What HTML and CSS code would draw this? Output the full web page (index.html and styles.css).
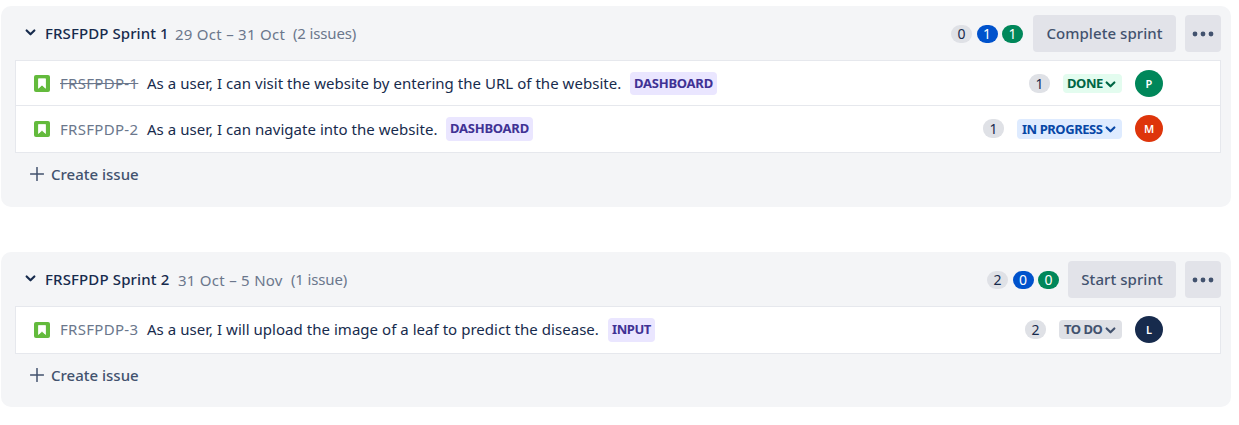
FILE: index.html
```
<!DOCTYPE html>
<html lang="en">
<head>
<meta charset="utf-8">
<title>Backlog</title>
<link rel="stylesheet" href="styles.css">
</head>
<body>
<svg class="defs" width="0" height="0">
  <symbol id="chevron" viewBox="0 0 10 8"><path d="M1.5 2.2 5 5.6 8.5 2.2" fill="none" stroke="currentColor" stroke-width="2" stroke-linecap="round" stroke-linejoin="round"/></symbol>
  <symbol id="story" viewBox="0 0 16 17" preserveAspectRatio="none"><rect width="16" height="17" rx="2" fill="#63ba3c"/><path d="M4.5 3.8h7v9.4L8 9.9l-3.500 3.300z" fill="#fff" stroke="#fff" stroke-linejoin="round" stroke-width=".8"/></symbol>
  <symbol id="plus" viewBox="0 0 14 14"><path d="M7 .5v13M.5 7h13" fill="none" stroke="currentColor" stroke-width="1.500" stroke-linecap="round"/></symbol>
  <symbol id="dots" viewBox="0 0 22 6"><g fill="currentColor"><circle cx="3" cy="3" r="2.400"/><circle cx="11" cy="3" r="2.400"/><circle cx="19" cy="3" r="2.400"/></g></symbol>
</svg>
<main class="backlog">
  <section class="sprint">
    <header class="sprint-head">
      <svg class="toggle"><use href="#chevron"/></svg>
      <h2 class="title title-1">FRSFPDP Sprint 1</h2>
      <span class="dates dates-1">29 Oct – 31 Oct</span>
      <span class="total">(2 issues)</span>
      <div class="counts"><span class="pill">0</span><span class="pill blue">1</span><span class="pill green">1</span></div>
      <button class="btn complete"><span>Complete sprint</span></button>
      <button class="btn more"><svg><use href="#dots"/></svg></button>
    </header>
    <div class="issues">
      <div class="issue first">
        <svg class="story"><use href="#story"/></svg>
        <span class="key resolved">FRSFPDP-1</span>
        <span class="summary s1">As a user, I can visit the website by entering the URL of the website.</span>
        <span class="epic">DASHBOARD</span>
        <span class="pill points">1</span>
        <span class="status done"><span>DONE</span><svg><use href="#chevron"/></svg></span>
        <span class="avatar av-p">P</span>
      </div>
      <div class="issue">
        <svg class="story"><use href="#story"/></svg>
        <span class="key">FRSFPDP-2</span>
        <span class="summary s2">As a user, I can navigate into the website.</span>
        <span class="epic tall">DASHBOARD</span>
        <span class="pill points">1</span>
        <span class="status progress"><span>IN PROGRESS</span><svg><use href="#chevron"/></svg></span>
        <span class="avatar av-m">M</span>
      </div>
    </div>
    <div class="create"><svg><use href="#plus"/></svg><span>Create issue</span></div>
  </section>
  <section class="sprint short">
    <header class="sprint-head">
      <svg class="toggle"><use href="#chevron"/></svg>
      <h2 class="title title-2">FRSFPDP Sprint 2</h2>
      <span class="dates dates-2">31 Oct – 5 Nov</span>
      <span class="total">(1 issue)</span>
      <div class="counts"><span class="pill">2</span><span class="pill blue">0</span><span class="pill green">0</span></div>
      <button class="btn start"><span>Start sprint</span></button>
      <button class="btn more"><svg><use href="#dots"/></svg></button>
    </header>
    <div class="issues">
      <div class="issue last">
        <svg class="story"><use href="#story"/></svg>
        <span class="key">FRSFPDP-3</span>
        <span class="summary s3">As a user, I will upload the image of a leaf to predict the disease.</span>
        <span class="epic tall input">INPUT</span>
        <span class="pill points">2</span>
        <span class="status todo"><span>TO DO</span><svg><use href="#chevron"/></svg></span>
        <span class="avatar av-l">L</span>
      </div>
    </div>
    <div class="create"><svg><use href="#plus"/></svg><span>Create issue</span></div>
  </section>
</main>
</body>
</html>
```
FILE: styles.css
```
* { box-sizing: border-box; }
body { margin: 0; background: #fff; color: #172b4d; font: 15px/20px "Noto Sans", "Open Sans", sans-serif; white-space: nowrap; }
svg { display: block; flex: none; }
.defs { display: none; }
.backlog { display: flex; flex-direction: column; gap: 45px; width: 1231px; padding: 6px 0 0 1px; }
.sprint { height: 201px; padding: 9px 10px 0 14px; background: #f4f5f7; border-radius: 10px; }
.sprint.short { height: 155px; }
.sprint-head { display: flex; align-items: center; height: 37px; }
.toggle { width: 11px; height: 9px; margin: 0 9px 3px 10px; }
.title { margin: 0; padding-bottom: 2px; font-size: 15px; line-height: 20px; font-weight: 500; letter-spacing: .09px; }
.title-1 { width: 130px; }
.title-2 { width: 133px; letter-spacing: .13px; }
.dates { color: #6b778c; letter-spacing: .27px; }
.dates-1 { width: 118px; }
.dates-2 { width: 113px; }
.total { padding-bottom: 2px; color: #6b778c; letter-spacing: -.15px; }
.counts { display: flex; gap: 4.500px; margin: 0 10px 0 auto; }
.short .counts { margin-right: 9px; }
.pill { flex: none; width: 21px; height: 18px; border-radius: 9px; background: #dfe1e6; font-size: 14px; line-height: 18px; text-align: center; }
.pill.blue { background: #0052cc; color: #fff; }
.pill.green { background: #00875a; color: #fff; }
.btn { display: flex; align-items: center; justify-content: center; height: 37px; padding: 0; border: 0; border-radius: 4px; background: #e2e3e9; color: #42526e; font: 500 15px/20px "Noto Sans", "Open Sans", sans-serif; }
.btn span { padding-bottom: 2px; letter-spacing: .06px; }
.complete { width: 143px; }
.start { width: 108px; }
.more { width: 36px; margin-left: 9px; }
.more svg { width: 22px; height: 6px; }
.issues { margin-top: 8px; border: 1px solid #e6e8ed; background: #fff; }
.issue { display: flex; align-items: center; height: 46px; padding: 0 57px 1px 18px; }
.issue.first { height: 45px; padding-bottom: 0; border-bottom: 1px solid #e6e8ed; }
.issue.last { padding-bottom: 2px; }
.story { width: 16px; height: 16px; margin-top: 1px; }
.first .story { height: 17px; margin-top: 0; }
.key { width: 87px; margin-left: 10px; color: #6b778c; letter-spacing: .3px; }
.resolved { text-decoration: line-through; }
.summary { flex: none; letter-spacing: .035px; }
.s1 { width: 483px; }
.s2 { width: 299px; }
.s3 { width: 461px; }
.epic { width: 87px; height: 23px; border-radius: 4px; background: #eae6ff; color: #403294; font-size: 13px; line-height: 22px; font-weight: 700; letter-spacing: -.25px; text-align: center; }
.epic.tall { height: 24px; }
.epic.input { width: 47px; margin-top: 2px; letter-spacing: -.45px; }
.points { height: 19px; line-height: 19px; margin: 0 13px 0 auto; }
.status { display: flex; align-items: center; justify-content: space-between; height: 19px; padding: 0 6px 0 5px; border-radius: 4px; font-size: 13px; line-height: 18px; font-weight: 700; letter-spacing: -.45px; }
.status svg { width: 11px; height: 9px; margin-top: 2px; }
.done { width: 59px; padding-left: 4px; background: #e3fcef; color: #006644; }
.progress { width: 105px; height: 20px; background: #deebff; color: #0747a6; }
.todo { width: 63px; background: #dfe1e6; color: #42526e; }
.avatar { width: 28px; height: 27px; margin-left: 13px; border-radius: 50%; color: #fff; font-size: 11px; line-height: 27px; font-weight: 600; text-align: center; }
.av-p { background: #00875a; }
.av-m { background: #de350b; }
.av-l { background: #172b4d; }
.create { display: flex; align-items: center; gap: 7px; height: 20px; margin: 11px 0 0 15px; color: #42526e; font-weight: 500; }
.create svg { width: 14px; height: 14px; }
```
